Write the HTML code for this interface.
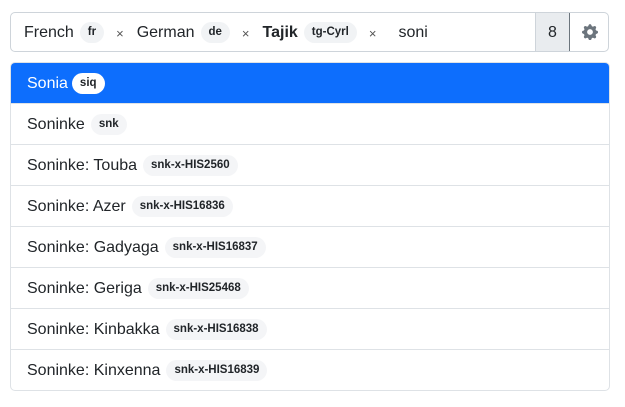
<!DOCTYPE html>
<html><head><meta charset="utf-8"><style>
*{box-sizing:border-box;margin:0;padding:0}
body{width:625px;height:407px;background:#fff;font-family:"Liberation Sans",sans-serif;color:#212529;position:relative;overflow:hidden}
.bar{position:absolute;left:10px;top:12px;width:599px;height:40px;border:1px solid #ced4da;border-radius:5px;overflow:hidden}
.tags{position:absolute;left:13px;top:1px;height:38px;display:flex;align-items:center;font-size:16px}
.b{display:inline-block;background:#f1f3f5;border-radius:11px;font-size:11.5px;font-weight:bold;padding:4px 8px;margin-left:6px;line-height:13px;position:relative;top:-1px}
.x{color:#555;font-size:13px;margin:0 13px 0 12px}
.cnt{position:absolute;left:524px;top:0;width:34px;height:38px;background:#e9ecef;border-left:1px solid #ced4da;font-size:16px;text-align:center;line-height:40px}
.gear{position:absolute;left:558px;top:-1px;width:41px;height:40px;border:1px solid #6c757d;border-radius:0 5px 5px 0;display:flex;align-items:center;justify-content:center}
.list{position:absolute;left:10px;top:62px;width:600px;border:1px solid #dee2e6;border-radius:5px;overflow:hidden}
.row{height:41px;border-top:1px solid #dee2e6;display:flex;align-items:center;padding-left:16px;padding-top:2px;font-size:16px}
.row:first-child{border-top:none;background:#0d6efd;color:#fff;height:40px}
.row:first-child .b{background:#fff;color:#212529;margin-left:4px}
.row .b{background:#f4f5f7}
</style></head><body>
<div class="bar">
 <div class="tags">French<span class="b">fr</span><span class="x">×</span>German<span class="b">de</span><span class="x">×</span><b>Tajik</b><span class="b">tg-Cyrl</span><span class="x">×</span><span style="margin-left:9px">soni</span></div>
 <div class="cnt">8</div>
 <div class="gear"><svg width="16" height="16" viewBox="0 0 16 16"><path fill="#6c757d" d="M9.4 1.1a1.5 1.5 0 0 0-2.8 0l-.1.4a1.5 1.5 0 0 1-2.2.9l-.3-.2a1.5 1.5 0 0 0-2 2l.2.3a1.5 1.5 0 0 1-.9 2.2l-.4.1a1.5 1.5 0 0 0 0 2.8l.4.1a1.5 1.5 0 0 1 .9 2.2l-.2.3a1.5 1.5 0 0 0 2 2l.3-.2a1.5 1.5 0 0 1 2.2.9l.1.4a1.5 1.5 0 0 0 2.8 0l.1-.4a1.5 1.5 0 0 1 2.2-.9l.3.2a1.5 1.5 0 0 0 2-2l-.2-.3a1.5 1.5 0 0 1 .9-2.2l.4-.1a1.5 1.5 0 0 0 0-2.8l-.4-.1a1.5 1.5 0 0 1-.9-2.2l.2-.3a1.5 1.5 0 0 0-2-2l-.3.2a1.5 1.5 0 0 1-2.2-.9zM8 10.9a2.9 2.9 0 1 1 0-5.8 2.9 2.9 0 0 1 0 5.8"/></svg></div>
</div>
<div class="list">
 <div class="row">Sonia<span class="b">siq</span></div>
 <div class="row">Soninke<span class="b">snk</span></div>
 <div class="row">Soninke: Touba<span class="b">snk-x-HIS2560</span></div>
 <div class="row">Soninke: Azer<span class="b">snk-x-HIS16836</span></div>
 <div class="row">Soninke: Gadyaga<span class="b">snk-x-HIS16837</span></div>
 <div class="row">Soninke: Geriga<span class="b">snk-x-HIS25468</span></div>
 <div class="row">Soninke: Kinbakka<span class="b">snk-x-HIS16838</span></div>
 <div class="row">Soninke: Kinxenna<span class="b">snk-x-HIS16839</span></div>
</div>
</body></html>
